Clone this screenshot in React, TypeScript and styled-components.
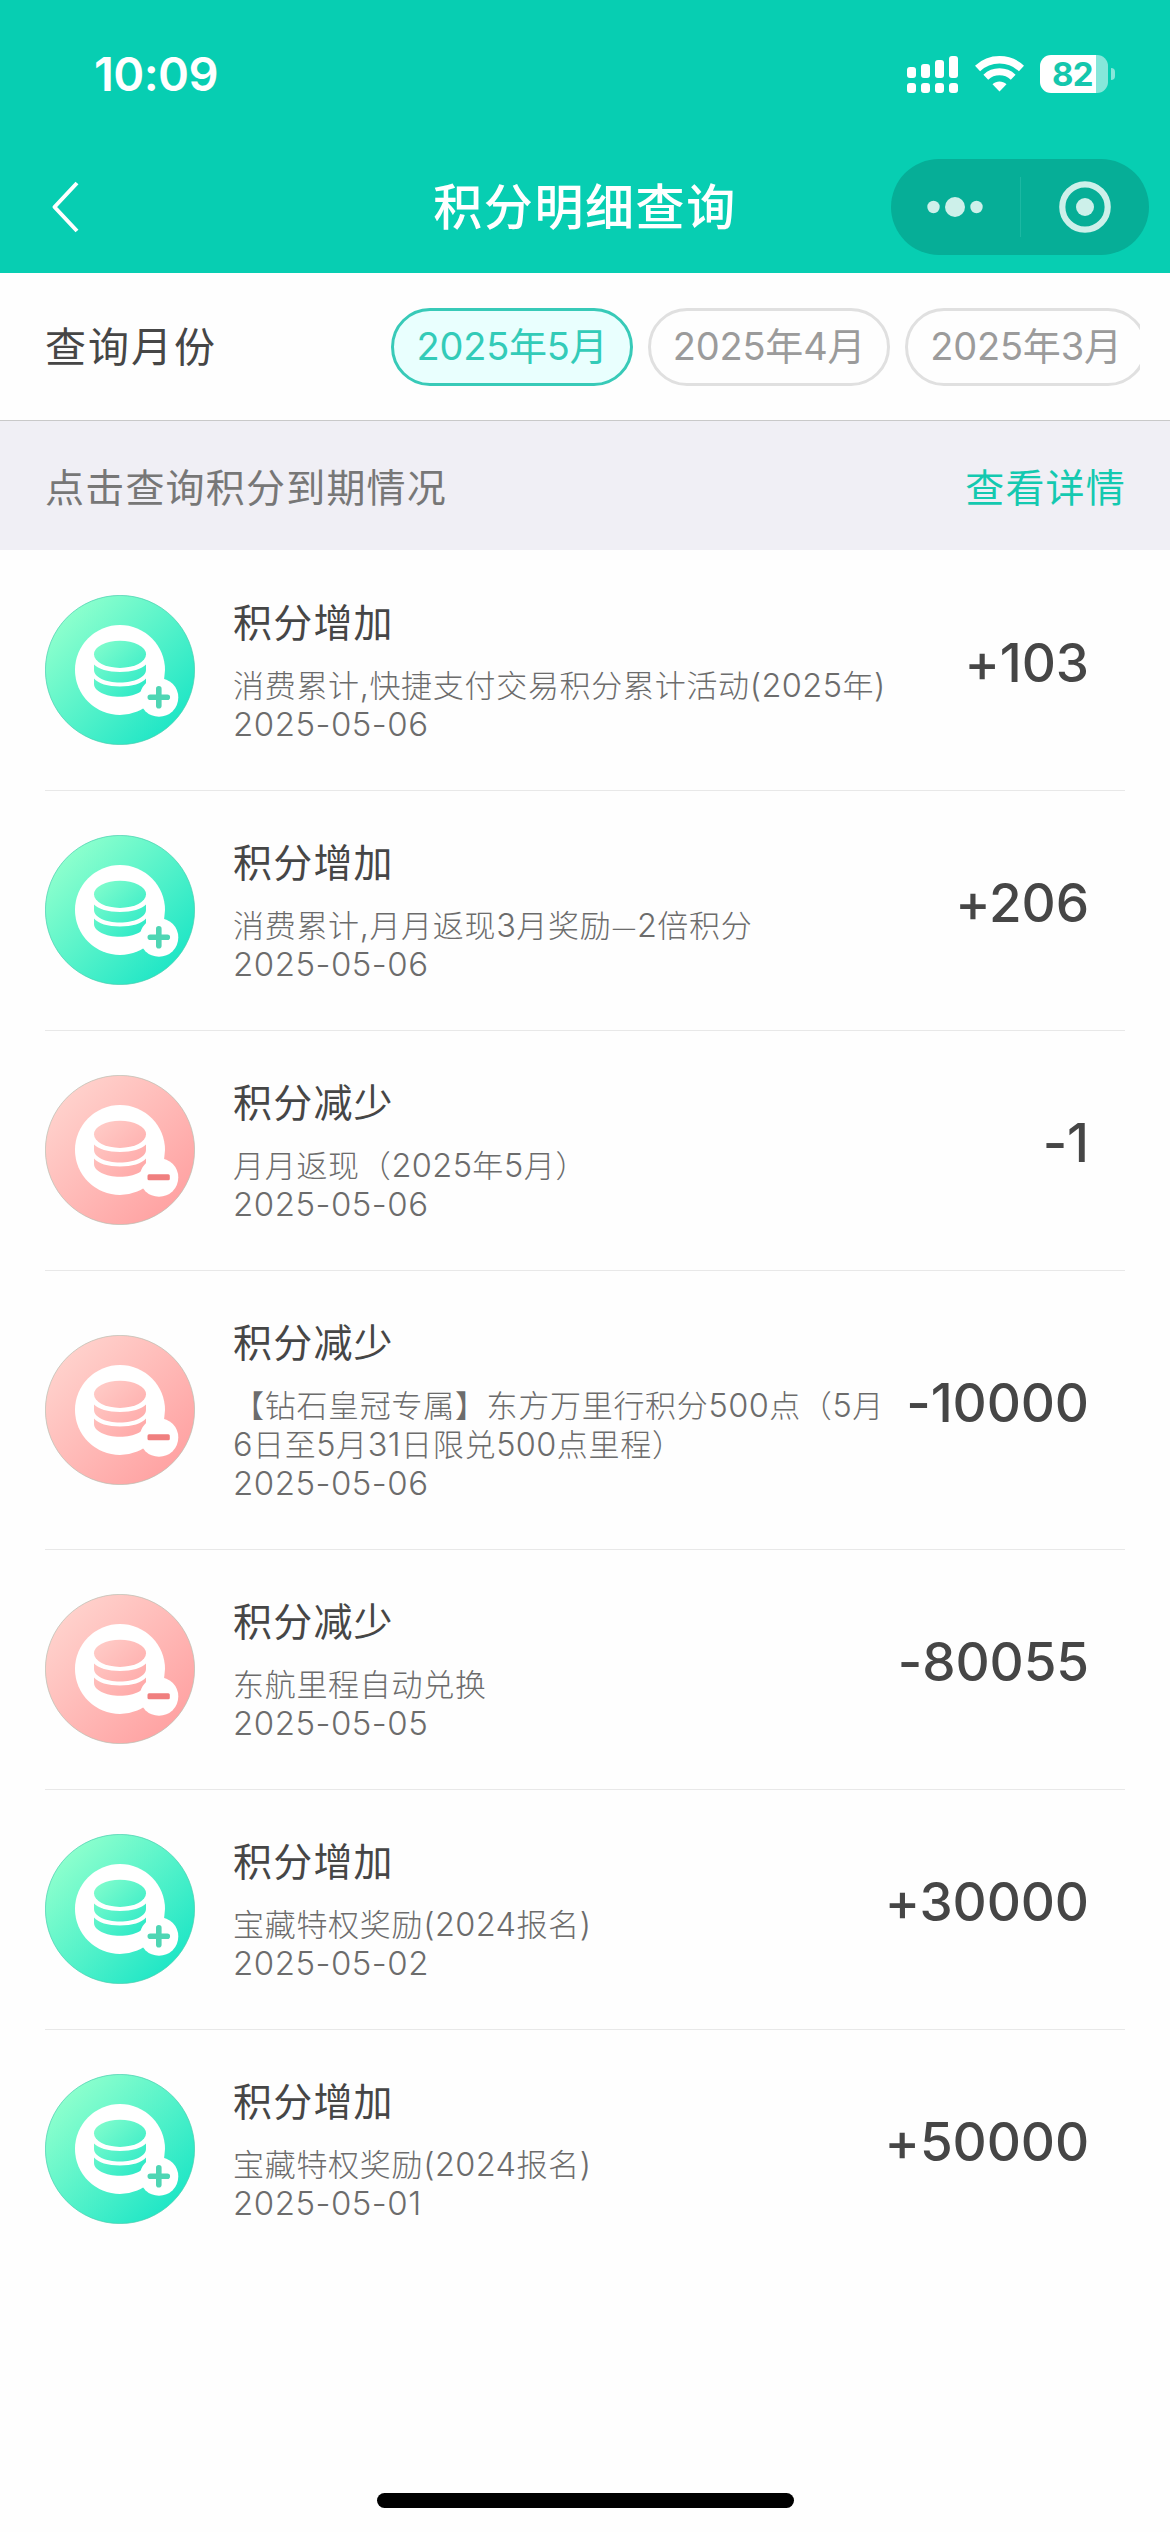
import React from "react";
import styled, { createGlobalStyle } from "styled-components";

const GlobalStyle = createGlobalStyle`
  * { box-sizing: border-box; }
  body {
    margin: 0;
    background: #fff;
    font-family: Inter, "Noto Sans CJK SC", sans-serif;
    color: #464646;
  }
`;

const Screen = styled.div`
  width: 1170px;
  height: 2532px;
  display: flex;
  flex-direction: column;
  background: #fefefe;
  overflow: hidden;
`;

const Header = styled.header`
  height: 273px;
  background: #07ceb2;
  color: #fff;
  display: flex;
  flex-direction: column;
`;

const StatusBar = styled.div`
  height: 141px;
  padding: 7px 55px 0 94px;
  display: flex;
  align-items: center;
  justify-content: space-between;
`;

const Clock = styled.span`
  font-size: 47px;
  font-weight: 600;
  line-height: 56px;
  letter-spacing: -0.6px;
`;

const StatusIcons = styled.div`
  display: flex;
  align-items: center;
  gap: 16px;
`;

const Battery = styled.div`
  display: flex;
  align-items: center;
  gap: 3px;
`;

const BatteryBody = styled.div`
  width: 68px;
  height: 38px;
  padding-right: 3px;
  border-radius: 11px;
  background: linear-gradient(to right, #fff 56px, #86e7da 56px);
  color: #14c7ad;
  font-size: 33px;
  font-weight: 700;
  line-height: 38px;
  letter-spacing: -0.6px;
  text-align: center;
`;

const BatteryCap = styled.div`
  width: 4px;
  height: 12px;
  border-radius: 0 6px 6px 0;
  background: #86e7da;
`;

const NavBar = styled.div`
  height: 132px;
  padding: 0 21px;
  display: grid;
  grid-template-columns: 258px 1fr 258px;
  align-items: center;
`;

const BackButton = styled.button`
  width: 60px;
  height: 60px;
  margin-left: 28px;
  padding: 0;
  border: 0;
  background: none;
  display: flex;
  align-items: center;
`;

const NavTitle = styled.h1`
  margin: 0;
  padding-top: 2px;
  font-size: 49px;
  font-weight: 500;
  line-height: 60px;
  letter-spacing: 1.6px;
  text-align: center;
  white-space: nowrap;
`;

const Capsule = styled.div`
  height: 96px;
  border-radius: 48px;
  background: #06ae97;
  display: flex;
  align-items: center;
`;

const CapsuleHalf = styled.div`
  flex: 1;
  display: flex;
  justify-content: center;
`;

const CapsuleLine = styled.div`
  width: 1px;
  height: 60px;
  background: #1cb8a3;
`;

const FilterBar = styled.section`
  height: 148px;
  padding: 0 30px 0 45px;
  border-bottom: 1px solid #c9c9c9;
  display: flex;
  align-items: center;
  justify-content: space-between;
`;

const FilterLabel = styled.span`
  font-size: 41px;
  line-height: 60px;
  letter-spacing: 2px;
`;

const MonthList = styled.div`
  width: 749px;
  display: flex;
  gap: 15px;
  overflow: hidden;
`;

const MonthPill = styled.button<{ $active?: boolean }>`
  flex: none;
  width: 242px;
  height: 78px;
  padding: 0 0 2px;
  border: 3px solid ${(p) => (p.$active ? "#38cab8" : "#e0e0e0")};
  border-radius: 39px;
  background: ${(p) => (p.$active ? "#e9fffe" : "#fefefe")};
  color: ${(p) => (p.$active ? "#33cbb8" : "#9b9b9b")};
  font-family: inherit;
  font-size: 38px;
  line-height: 60px;
  letter-spacing: -0.2px;
  white-space: nowrap;
`;

const Notice = styled.section`
  height: 129px;
  padding: 5px 44px 0 45px;
  background: #f0eff5;
  display: flex;
  align-items: center;
  justify-content: space-between;
  font-size: 39px;
  line-height: 60px;
  letter-spacing: 1.2px;
  color: #777;
`;

const DetailLink = styled.a`
  color: #14c9b0;
`;

const RecordList = styled.ul`
  margin: 0;
  padding: 1px 45px 0;
  list-style: none;
`;

const Record = styled.li`
  padding: 44px 36px 45px 0;
  border-bottom: 1px solid #e8e8e8;
  display: flex;
  align-items: center;

  &:last-child { border-bottom: 0; }
`;

const RecordText = styled.div`
  width: 660px;
  margin: 0 -60px 0 38px;
  padding-bottom: 1px;
  flex: none;
`;

const RecordTitle = styled.h2`
  margin: 0 0 15px;
  font-size: 39px;
  font-weight: 400;
  line-height: 56px;
  letter-spacing: 1.2px;
`;

const RecordLine = styled.p`
  margin: 0;
  font-size: 31px;
  font-weight: 300;
  line-height: 39px;
  letter-spacing: 0.7px;
  color: #6c6c6c;
`;

const Latin = styled.span`
  font-size: 32.5px;
  line-height: 0;
  letter-spacing: 0.4px;
`;

const WideDash = styled.span`
  font-family: "Noto Sans CJK SC", sans-serif;
  font-size: 28px;
  line-height: 0;
`;

const RecordDate = styled(RecordLine)`
  font-size: 33px;
  letter-spacing: 0.5px;
`;

const Amount = styled.strong`
  margin-left: auto;
  padding-bottom: 14px;
  font-size: 53px;
  font-weight: 500;
  line-height: 64px;
  letter-spacing: -0.1px;
  white-space: nowrap;
`;

const HomeArea = styled.footer`
  flex: 1;
  padding-bottom: 24px;
  display: flex;
  align-items: flex-end;
  justify-content: center;
`;

const HomeIndicator = styled.div`
  width: 417px;
  height: 15px;
  border-radius: 8px;
  background: #000;
`;

const SignalIcon = () => (
  <svg width="52" height="38" viewBox="0 0 52 38" fill="#fff">
    {[12, 9, 5, 1].map((top, i) => (
      <g key={top}>
        <rect x={i * 14} y={top} width="9" height={23 - top} rx="3" />
        <rect x={i * 14} y="28" width="9" height="10" rx="3" />
      </g>
    ))}
  </svg>
);

const WifiIcon = () => (
  <svg width="49" height="38" viewBox="0 0 49 38" fill="none" stroke="#fff">
    <path d="M2.5 13.5a32 32 0 0 1 44 0" strokeWidth="7.5" />
    <path d="M10.8 22.2a20 20 0 0 1 27.4 0" strokeWidth="7" />
    <path d="M24.5 36.5l-7-7.3c4-3.6 10-3.6 14 0z" fill="#fff" stroke="none" />
  </svg>
);

const BackIcon = () => (
  <svg width="32" height="54" viewBox="0 0 32 54" fill="none" stroke="#fff" strokeWidth="4">
    <path d="M28 3 5.500 27 28 51" strokeLinejoin="round" />
  </svg>
);

const MoreIcon = () => (
  <svg width="56" height="22" viewBox="0 0 56 22" fill="#cdf0ea">
    <circle cx="6.500" cy="11" r="6.200" />
    <circle cx="28" cy="11" r="10" />
    <circle cx="49.500" cy="11" r="6.200" />
  </svg>
);

const CloseIcon = () => (
  <svg width="52" height="52" viewBox="0 0 52 52">
    <circle cx="26" cy="26" r="22.700" fill="none" stroke="#cdf0ea" strokeWidth="6.200" />
    <circle cx="26" cy="26" r="9" fill="#cdf0ea" />
  </svg>
);

type Kind = "plus" | "minus";

const palette = {
  plus: { from: "#8bffcd", to: "#20e6c6", sign: "#4fd6b4", rim: "#45cfae" },
  minus: { from: "#ffd0cb", to: "#ffa3a3", sign: "#f07f7f", rim: "#b9bdb0" },
};

const CoinIcon = ({ kind, id }: { kind: Kind; id: string }) => {
  const c = palette[kind];
  return (
    <svg width="150" height="150" viewBox="0 0 150 150">
      <defs>
        <linearGradient id={`bg-${id}`} gradientUnits="userSpaceOnUse" x1="20" y1="25" x2="128" y2="130">
          <stop offset="0" stopColor={c.from} />
          <stop offset="1" stopColor={c.to} />
        </linearGradient>
        <linearGradient id={`coin-${id}`} gradientUnits="userSpaceOnUse" x1="46" y1="42" x2="104" y2="106">
          <stop offset="0" stopColor={c.from} />
          <stop offset="1" stopColor={c.to} />
        </linearGradient>
      </defs>
      <circle cx="75" cy="75" r="74.600" fill={`url(#bg-${id})`} stroke={c.rim} strokeWidth="0.700" />
      <circle cx="75" cy="75" r="45" fill="#fff" />
      <g fill={`url(#coin-${id})`}>
        <ellipse cx="75" cy="59.300" rx="26" ry="13.600" />
        <path d="M49 69.500c4 4.500 14 7.500 26 7.500s22-3 26-7.500V75c0 7-11.500 12.500-26 12.500S49 82 49 75z" />
        <path d="M49 83.500c4 5 14 8 26 8s22-3 26-8v5.500c0 7-11.500 12.700-26 12.700s-26-5.700-26-12.700z" />
      </g>
      <circle cx="114" cy="102.500" r="19.300" fill="#fff" />
      {kind === "plus" ? (
        <path
          d="M105.300 102.200h17M113.800 93.700v17"
          stroke={c.sign}
          strokeWidth="5.600"
          strokeLinecap="round"
        />
      ) : (
        <rect x="102.500" y="99.300" width="22.300" height="6" rx="1.500" fill={c.sign} />
      )}
    </svg>
  );
};

const MixedText = ({ text }: { text: string }) => (
  <>
    {text.split(/([\x20-\x7e]+|—)/).map((run, i) => {
      if (run === "—") return <WideDash key={i}>{run}</WideDash>;
      return i % 2 ? <Latin key={i}>{run}</Latin> : run;
    })}
  </>
);

const months = ["2025年5月", "2025年4月", "2025年3月"];

const records: { kind: Kind; text: string; date: string; amount: string }[] = [
  { kind: "plus", text: "消费累计,快捷支付交易积分累计活动(2025年)", date: "2025-05-06", amount: "+103" },
  { kind: "plus", text: "消费累计,月月返现3月奖励—2倍积分", date: "2025-05-06", amount: "+206" },
  { kind: "minus", text: "月月返现（2025年5月）", date: "2025-05-06", amount: "-1" },
  { kind: "minus", text: "【钻石皇冠专属】东方万里行积分500点（5月6日至5月31日限兑500点里程）", date: "2025-05-06", amount: "-10000" },
  { kind: "minus", text: "东航里程自动兑换", date: "2025-05-05", amount: "-80055" },
  { kind: "plus", text: "宝藏特权奖励(2024报名)", date: "2025-05-02", amount: "+30000" },
  { kind: "plus", text: "宝藏特权奖励(2024报名)", date: "2025-05-01", amount: "+50000" },
];

export default function App() {
  return (
    <Screen>
      <GlobalStyle />
      <Header>
        <StatusBar>
          <Clock>10:09</Clock>
          <StatusIcons>
            <SignalIcon />
            <WifiIcon />
            <Battery>
              <BatteryBody>82</BatteryBody>
              <BatteryCap />
            </Battery>
          </StatusIcons>
        </StatusBar>
        <NavBar>
          <BackButton>
            <BackIcon />
          </BackButton>
          <NavTitle>积分明细查询</NavTitle>
          <Capsule>
            <CapsuleHalf><MoreIcon /></CapsuleHalf>
            <CapsuleLine />
            <CapsuleHalf><CloseIcon /></CapsuleHalf>
          </Capsule>
        </NavBar>
      </Header>
      <FilterBar>
        <FilterLabel>查询月份</FilterLabel>
        <MonthList>
          {months.map((m, i) => (
            <MonthPill key={m} $active={i === 0}>{m}</MonthPill>
          ))}
        </MonthList>
      </FilterBar>
      <Notice>
        <span>点击查询积分到期情况</span>
        <DetailLink>查看详情</DetailLink>
      </Notice>
      <RecordList>
        {records.map((r, i) => (
          <Record key={i}>
            <CoinIcon kind={r.kind} id={String(i)} />
            <RecordText>
              <RecordTitle>{r.kind === "plus" ? "积分增加" : "积分减少"}</RecordTitle>
              <RecordLine><MixedText text={r.text} /></RecordLine>
              <RecordDate>{r.date}</RecordDate>
            </RecordText>
            <Amount>{r.amount}</Amount>
          </Record>
        ))}
      </RecordList>
      <HomeArea>
        <HomeIndicator />
      </HomeArea>
    </Screen>
  );
}
